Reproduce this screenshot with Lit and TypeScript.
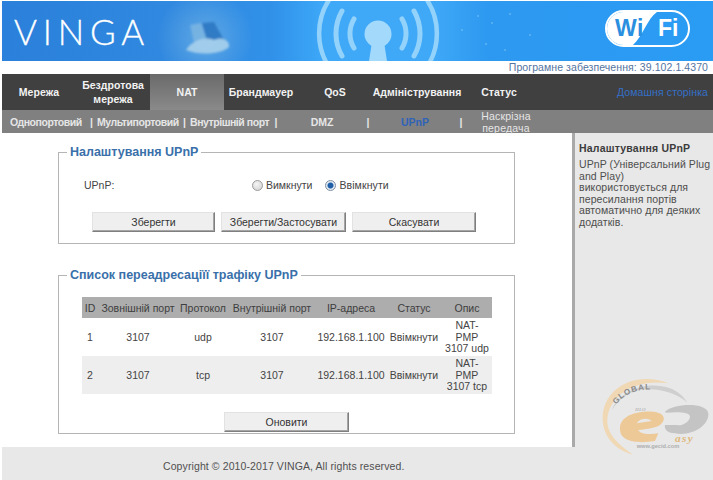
import { LitElement, html, css, svg } from "lit";
import { customElement } from "lit/decorators.js";

const rows = [
  ["1", "3107", "udp", "3107", "192.168.1.100", "Ввімкнути", ["NAT-", "PMP", "3107 udp"]],
  ["2", "3107", "tcp", "3107", "192.168.1.100", "Ввімкнути", ["NAT-", "PMP", "3107 tcp"]],
];

const antenna = svg`
  <g fill="none" stroke="#93d3fb" stroke-linecap="round">
    <path d="M354 19 A28 28 0 0 0 354 48" stroke-width="5"/>
    <path d="M342 11 A45 45 0 0 0 342 56" stroke-width="5"/>
    <path d="M331 -3 A62 62 0 0 0 331 70" stroke-width="4.500"/>
    <path d="M402 19 A28 28 0 0 1 402 48" stroke-width="5"/>
    <path d="M414 11 A45 45 0 0 1 414 56" stroke-width="5"/>
    <path d="M425 -3 A62 62 0 0 1 425 70" stroke-width="4.500"/>
  </g>
  <circle cx="378" cy="34" r="13.500" fill="#a3dafc"/>
  <path d="M372 42 H384 L387 61 H369 Z" fill="#a3dafc"/>
`;

@customElement("app-root")
export class AppRoot extends LitElement {
  static styles = css`
    :host { display: block; width: 713px; height: 480px; overflow: hidden; background: #fff; font-family: "Liberation Sans", Arial, sans-serif; font-size: 10.5px; color: #444; position: relative; }
    * { box-sizing: border-box; }
    .banner { position: relative; height: 60px; margin: 1px 0 0 2px; display: flex; align-items: center; justify-content: space-between; padding: 0 23px 0 12px; overflow: hidden;
      background: linear-gradient(90deg, #2a80da 0%, #3189e0 25%, #3096ee 48%, #2a9cf4 100%); }
    .art { position: absolute; left: -2px; top: -1px; width: 713px; height: 61px; }
    .logo { position: relative; font-family: Lato, sans-serif; font-weight: 300; font-size: 35px; letter-spacing: 5.800px; color: #fff; line-height: 1; -webkit-text-stroke: .3px #fff; }
    .wifi { position: relative; display: flex; width: 85px; height: 37px; margin-top: -5px; border: 2px solid #fff; border-radius: 19px; overflow: hidden; font-weight: 700; font-size: 23px; line-height: 33px; }
    .white { position: absolute; inset: 0; background: #fff; clip-path: path("M0 0 H50 C40 7 36 24 26 33 H0 Z"); }
    .wi { position: relative; flex: 0 0 49px; color: #2a8fdf; padding-left: 8px; letter-spacing: .6px; }
    .fi { position: relative; flex: 1; color: #fff; padding-left: 2px; }
    .firmware { height: 13px; line-height: 13px; text-align: right; padding-right: 5px; color: #54749f; font-size: 10.5px; letter-spacing: .08px; white-space: nowrap; }
    .nav { height: 36px; background: #404040; margin-left: 2px; display: grid; grid-template-columns: 74px 74px 74px 74px 74px 90px 74px 1fr; align-items: center; color: #f2f2f2; font-weight: 700; font-size: 10.5px; text-align: center; line-height: 14px; letter-spacing: .03px; }
    .nav > div { height: 100%; display: flex; align-items: center; justify-content: center; }
    .nav .on { background: linear-gradient(#6a6a6a, #8a8a8a); }
    .nav .home { justify-content: flex-end; padding-right: 5px; color: #3470c8; font-weight: 400; letter-spacing: .1px; }
    .sub { height: 23px; background: #808080; margin-left: 2px; display: grid; grid-template-columns: 86px 7px 87px 5px 86px 6px 86px 6px 88px 4px 86px 1fr; align-items: center; color: #e6e6e6; font-weight: 700; font-size: 10.5px; text-align: center; line-height: 12px; }
    .sub .left { text-align: left; white-space: nowrap; letter-spacing: -.45px; }
    .sub .p1 { padding-left: 8px; }
    .sub .p2 { padding-left: 2px; }
    .sub .p3 { padding-left: 3px; }
    .sub .active { color: #2f63b8; }
    .sub .pass { font-weight: 400; letter-spacing: .2px; }
    .body { display: flex; height: 314px; margin-left: 2px; }
    .main { flex: 0 0 570px; padding: 19px 0 0 56px; }
    .side { flex: 1; background: #e8e8e8; border-left: 3px solid #a9a9a9; padding: 9px 0 0 4px; line-height: 11.6px; letter-spacing: .08px; color: #4e4e4e; position: relative; }
    .side h4 { margin: 0 0 4px; font-size: 10.5px; line-height: 13px; color: #3c3c3c; letter-spacing: .2px; }
    .box { position: relative; width: 457px; border: 1px solid #b5b5b5; }
    .box.a { height: 92px; }
    .box.b { height: 159px; margin-top: 31px; padding: 21px 23px 0; }
    .legend { position: absolute; left: 8px; top: -8px; background: #fff; padding: 0 3px; color: #3a70aa; font-weight: 700; font-size: 12.5px; line-height: 15px; white-space: nowrap; }
    .radio-row { display: flex; align-items: center; padding: 25px 0 0 25px; height: 39px; }
    .radio-row .lbl { flex: 0 0 168px; }
    .radio-row label { display: inline-flex; align-items: center; gap: 3px; margin-right: 13px; }
    .radio-row label + label { letter-spacing: .1px; }
    input[type=radio] { appearance: none; width: 11px; height: 11px; margin: 0; border-radius: 50%; border: 1px solid #9a9a9a; background: radial-gradient(circle at 40% 35%, #f4f4f4, #cfcfcf); }
    input[type=radio]:checked { background: radial-gradient(circle, #1f5fa8 0 2.5px, #e3e9f0 3.5px); border-color: #7d8fa3; }
    .btns { display: flex; gap: 6px; padding: 20px 0 0 33px; }
    button { height: 20px; font: inherit; color: #333; padding: 0; background: #efefef; border: 1px solid; border-color: #e2e2e2 #7f7f7f #7f7f7f #e2e2e2; box-shadow: inset -1px -1px 0 #a5a5a5; }
    .w1 { width: 123px; } .w2 { width: 125px; } .w3 { width: 124px; }
    .refresh { width: 125px; display: block; margin: 18px 0 0 142px; }
    table { width: 410px; border-collapse: collapse; table-layout: fixed; }
    th { height: 21px; background: #adadad; font-weight: 400; color: #3e3e3e; padding: 0; white-space: nowrap; }
    td { height: 38px; text-align: center; padding: 1px 0 0; line-height: 11.6px; color: #444; white-space: nowrap; }
    tr.alt td { background: #eee; }
    .footer { height: 33px; margin-left: 2px; background: #e8e8e8; padding: 13px 0 0 161px; line-height: 13px; color: #505050; letter-spacing: .1px; }
    .mark { position: absolute; left: 590px; top: 370px; width: 123px; height: 85px; pointer-events: none; }
  `;

  render() {
    return html`
      <div class="banner">
        <svg class="art" viewBox="0 0 713 61" aria-hidden="true">
          <defs>
            <radialGradient id="g" cx="205" cy="38" r="48" gradientUnits="userSpaceOnUse">
              <stop offset="0" stop-color="#74b4e4" stop-opacity=".7"/>
              <stop offset="1" stop-color="#74b4e4" stop-opacity="0"/>
            </radialGradient>
            <linearGradient id="c" x1="0" x2="1">
              <stop offset="0" stop-color="#3aa6f6" stop-opacity="0"/>
              <stop offset=".25" stop-color="#3fa8f7"/>
              <stop offset=".75" stop-color="#3fa8f7"/>
              <stop offset="1" stop-color="#3aa6f6" stop-opacity="0"/>
            </linearGradient>
            <filter id="soft" x="-20%" y="-20%" width="140%" height="140%"><feGaussianBlur stdDeviation="1.300"/></filter>
          </defs>
          <rect x="270" y="0" width="220" height="61" fill="url(#c)"/>
          <rect x="150" y="0" width="110" height="61" fill="url(#g)"/>
          <g filter="url(#soft)">
            <path d="M202 23 L214 22 L224 40 L206 40 Z" fill="#2a74bf" opacity=".85"/>
            <path d="M190 25 L201 23 L207 40 L194 42 Z" fill="#7db6e2" opacity=".8"/>
            <path d="M186 50 C192 40 206 36 214 40 C222 36 230 40 229 47 C222 54 200 56 186 50 Z" fill="#a9d0ec" opacity=".9"/>
          </g>
          ${antenna}
          <g fill="#8fd0f7" opacity=".5">
            <circle cx="478" cy="16" r="1"/><circle cx="492" cy="23" r="1"/><circle cx="510" cy="14" r="1"/><circle cx="486" cy="44" r="1"/><circle cx="530" cy="35" r="1"/><circle cx="462" cy="30" r="1"/><circle cx="505" cy="50" r="1"/>
          </g>
        </svg>
        <div class="logo">VINGA</div>
        <div class="wifi"><div class="white"></div><div class="wi">Wi</div><div class="fi">Fi</div></div>
      </div>
      <div class="firmware">Програмне забезпечення: 39.102.1.4370</div>
      <div class="nav">
        <div>Мережа</div><div>Бездротова<br>мережа</div><div class="on">NAT</div><div>Брандмауер</div><div>QoS</div><div>Адміністрування</div><div>Статус</div><div class="home">Домашня сторінка</div>
      </div>
      <div class="sub">
        <div class="left p1">Однопортовий</div><div>|</div>
        <div class="left p2">Мультипортовий</div><div>|</div>
        <div class="left p3">Внутрішній порт</div><div>|</div>
        <div>DMZ</div><div>|</div>
        <div class="active">UPnP</div><div>|</div>
        <div class="pass">Наскрізна<br>передача</div><div></div>
      </div>
      <div class="body">
        <div class="main">
          <div class="box a">
            <div class="legend">Налаштування UPnP</div>
            <div class="radio-row">
              <div class="lbl">UPnP:</div>
              <label><input type="radio" name="u">Вимкнути</label>
              <label><input type="radio" name="u" checked>Ввімкнути</label>
            </div>
            <div class="btns">
              <button class="w1">Зберегти</button><button class="w2">Зберегти/Застосувати</button><button class="w3">Скасувати</button>
            </div>
          </div>
          <div class="box b">
            <div class="legend">Список переадресаціїї трафіку UPnP</div>
            <table>
              <colgroup><col style="width:16px"><col style="width:80px"><col style="width:50px"><col style="width:88px"><col style="width:70px"><col style="width:56px"><col style="width:50px"></colgroup>
              <tr><th>ID</th><th>Зовнішній порт</th><th>Протокол</th><th>Внутрішній порт</th><th>IP-адреса</th><th>Статус</th><th>Опис</th></tr>
              ${rows.map((r, i) => html`<tr class=${i % 2 ? "alt" : ""}>
                <td>${r[0]}</td><td>${r[1]}</td><td>${r[2]}</td><td>${r[3]}</td><td>${r[4]}</td><td>${r[5]}</td>
                <td>${(r[6] as string[]).map((t) => html`${t}<br>`)}</td>
              </tr>`)}
            </table>
            <button class="refresh">Оновити</button>
          </div>
        </div>
        <div class="side">
          <h4>Налаштування UPnP</h4>
          UPnP (Універсальний Plug and Play) використовується для пересилання портів автоматично для деяких додатків.
        </div>
      </div>
      <div class="footer">Copyright © 2010-2017 VINGA, All rights reserved.</div>
      <svg class="mark" viewBox="0 0 369 255" aria-hidden="true">
        <defs><path id="t" d="M78 104 Q120 50 205 60"/></defs>
        <path d="M235 40 C130 0 35 60 38 150 C40 200 75 240 130 254 C85 225 50 190 52 150 C55 80 130 25 235 40 Z" fill="#f0d8b4"/>
        <path d="M66 120 C85 65 170 30 240 55 C262 63 280 78 292 98 C262 70 205 52 150 60 C115 66 85 88 66 120 Z" fill="#cfcfcf"/>
        <text font-family="Liberation Sans, sans-serif" font-size="24" font-weight="700" fill="#8a8a8a" letter-spacing="3"><textPath href="#t">GLOBAL</textPath></text>
        <text x="135" y="122" font-family="Liberation Serif, serif" font-style="italic" font-weight="700" font-size="15" fill="#b9b9b9">HLO</text>
        <path d="M90 175 C90 135 145 122 190 125 C225 128 230 150 210 165 C200 173 170 178 145 180 C150 192 175 195 205 190 L195 213 C140 222 88 215 90 175 Z M140 160 L185 153 C178 143 150 142 140 160 Z" fill="#eec998" fill-rule="evenodd"/>
        <path d="M225 125 C250 100 350 95 355 130 C358 170 300 200 255 190 C230 190 222 175 225 165 L262 165 C272 170 300 155 300 140 C300 125 260 125 228 128 Z" fill="#c4c4c4"/>
        <text x="255" y="216" font-family="Liberation Serif, serif" font-style="italic" font-weight="700" font-size="34" letter-spacing="4" fill="#dfb97e">asy</text>
        <text x="140" y="233" font-family="Liberation Sans, sans-serif" font-weight="700" font-size="17" fill="#aeaeae">www.gecid.com</text>
      </svg>
    `;
  }
}
